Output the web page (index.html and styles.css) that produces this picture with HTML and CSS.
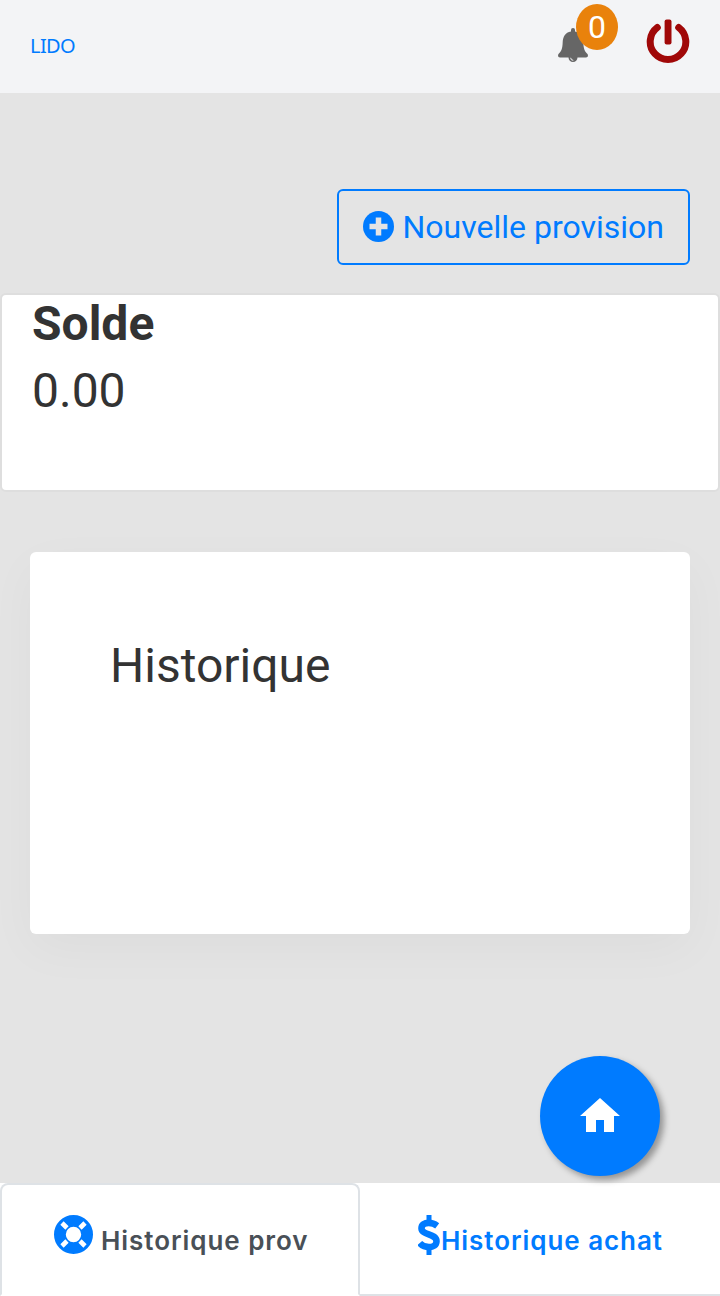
FILE: index.html
```html
<!DOCTYPE html>
<html lang="fr">
<head>
<meta charset="utf-8" />
<meta name="viewport" content="width=device-width, initial-scale=1" />
<title>Lido</title>
<link rel="stylesheet" href="styles.css">
</head>

<body>
<header class="topbar">
	<a class="brand">LIDO</a>
	<div class="actions">
		<a class="bell">
			<svg width="30" height="35" viewBox="0 0 30 35">
				<path fill="#666" d="M13 3.500V2a2 2 0 0 1 4 0v1.500C23 4.500 25 9 25.300 14c.2 7 1.500 9.500 4.200 12 1 1.500.3 3.500-1.500 3.500h-8.500a4.500 4.500 0 0 1-9 0H2C.2 29.500-.5 27.500.5 26c2.700-2.500 4-5 4.200-12C5 9 7 4.500 13 3.500z"/>
				<path fill="none" stroke="#f3f4f6" stroke-width="1" d="M12.700 29.800a2.500 2.500 0 0 0 2.600 2.500"/>
			</svg>
			<span class="badge">0</span>
		</a>
		<a class="power">
			<svg width="44" height="46" viewBox="0 0 44 46">
				<path fill="none" stroke="#a00808" stroke-width="7" stroke-linecap="round" d="M11.300 9.500A17.800 17.800 0 1 0 32.700 9.500"/>
				<rect x="18.600" y="1.500" width="6.900" height="25" rx="2" fill="#a00808"/>
			</svg>
		</a>
	</div>
</header>

<main>
	<div class="toolbar">
		<button type="button" class="btn">
			<svg width="31" height="31" viewBox="0 0 31 31">
				<circle cx="15.500" cy="15.500" r="15.500" fill="#007bff"/>
				<path stroke="#e4e4e4" stroke-width="5.500" d="M15.500 6.500v18M6.500 15.500h18"/>
			</svg>
			<span>Nouvelle provision</span>
		</button>
	</div>
	<section class="solde">
		<h2>Solde</h2>
		<p>0.00</p>
	</section>
	<section class="histo">
		<h2>Historique</h2>
	</section>
</main>

<a class="fab">
	<svg width="48" height="48" viewBox="0 0 24 24"><path fill="#fff" d="M10 20v-6h4v6h5v-8h3L12 3 2 12h3v8z"/></svg>
</a>

<nav class="tabs">
	<a class="tab active">
		<svg class="ring" width="39" height="39" viewBox="0 0 39 39">
			<circle cx="19.500" cy="19.500" r="13.600" fill="none" stroke="#007bff" stroke-width="11.800"/>
			<path stroke="#fff" stroke-width="4.600" d="M8 8l5 5M31 8l-5 5M8 31l5-5M31 31l-5-5"/>
		</svg>
		<span>Historique prov</span>
	</a>
	<a class="tab">
		<svg class="dollar" width="22" height="40" viewBox="0 0 22 40">
			<path fill="none" stroke="#007bff" stroke-width="6.600" d="M19.200 10.800C16.500 8.800 13.500 7.900 10.700 7.900 6.500 7.900 3.500 9.800 3.500 13.200c0 7.300 15 5 15 13 0 3.900-3.400 5.900-7.500 5.900-3.700 0-7-1.400-9.300-4"/>
			<path stroke="#007bff" stroke-width="5" d="M11 0v7M11 33v7"/>
		</svg>
		<span>Historique achat</span>
	</a>
</nav>
</body>
</html>
```

FILE: styles.css
```css
*{box-sizing:border-box;}
html, body{margin:0; padding:0; height:100%;}
body{display:flex; flex-direction:column; background:#e4e4e4; color:#333; font-family:Roboto, sans-serif; position:relative; overflow:hidden;}
h2, p{margin:0; font-weight:400;}
svg{display:block; flex:none;}

.topbar{height:93px; flex:none; display:flex; justify-content:space-between; padding:0 30px; background:#f3f4f6;}
.brand{font:20px/28px "Noto Sans", sans-serif; letter-spacing:-.6px; color:#007bff; padding-top:32px;}
.actions{display:flex;}
.bell{position:relative; padding-top:28px; margin-right:58px;}
.badge{position:absolute; left:18px; top:4px; width:42px; height:46px; border-radius:50%; background:#e9820c; color:#fff; font:32px/46px Roboto, sans-serif; text-align:center;}
.power{padding-top:18px;}

main{flex:1;}
.toolbar{display:flex; justify-content:flex-end; padding:96px 30px 28px 0;}
.btn{display:flex; align-items:center; gap:8.5px; width:353px; height:76px; padding:0 0 0 24px; border:2px solid #007bff; border-radius:6px; background:none; color:#007bff; font:32px/48px Roboto, sans-serif; white-space:nowrap;}
.btn svg{margin-top:-2px;}
.solde{height:199px; padding:0 30px; background:#fff; border:2px solid #dedede; border-radius:6px;}
.solde h2{font-size:48px; line-height:57px; font-weight:700;}
.solde p{font-size:48px; line-height:78px;}
.histo{height:382px; margin:60px 30px 0; padding:85px 80px; background:#fff; border-radius:6px; box-shadow:0 15px 50px rgba(0,0,0,.035);}
.histo h2{font-size:48px; line-height:57px;}

.fab{position:absolute; right:60px; bottom:120px; z-index:2; width:120px; height:120px; display:flex; align-items:center; justify-content:center; border-radius:50%; background:#007bff; box-shadow:4px 4px 6px rgba(0,0,0,.35);}

.tabs{flex:none; display:flex; height:113px; background:#fff; font:600 26px/32px Inter, sans-serif; letter-spacing:.95px;}
.tab{width:50%; display:flex; align-items:flex-start; padding-top:32px; color:#007bff; border-bottom:2px solid #dee2e6; white-space:nowrap;}
.tab span{padding-top:10px;}
.active{color:#495057; padding-left:52px; padding-top:30px; border:2px solid #dee2e6; border-bottom-color:#fff; border-radius:8px 8px 0 0;}
.ring{margin-right:8px;}
.dollar{margin:0 1px 0 58px;}
```
